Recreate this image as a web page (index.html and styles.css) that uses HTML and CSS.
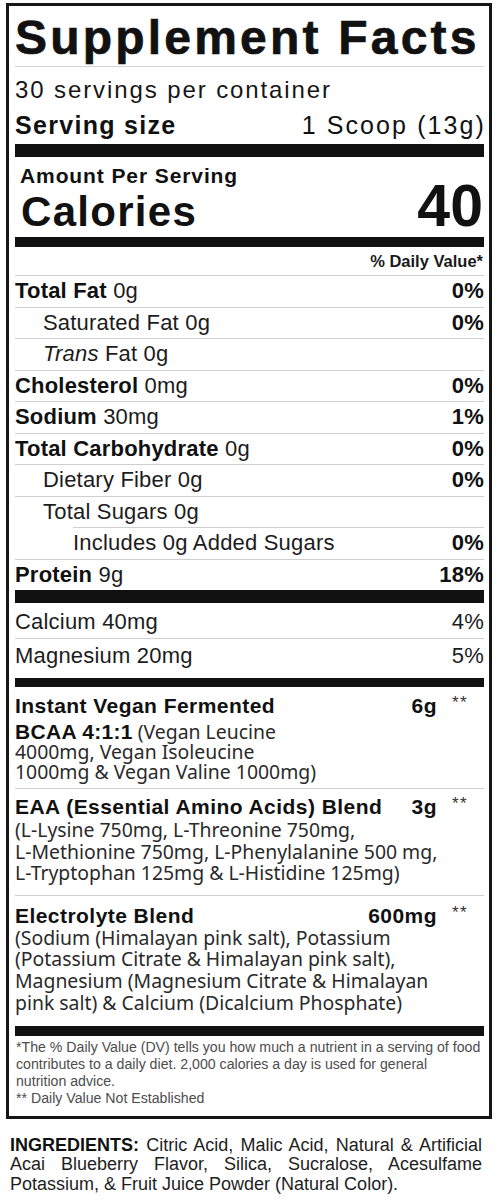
FILE: index.html
```html
<!DOCTYPE html>
<html lang="en">
<head>
<meta charset="utf-8">
<title>Supplement Facts</title>
<link rel="stylesheet" href="styles.css">
</head>
<body>
<div class="label">
  <h1 class="title">Supplement Facts</h1>
  <div class="servings">30 servings per container</div>
  <div class="serving-size"><span class="ss-label">Serving size</span><span class="ss-value">1 Scoop (13g)</span></div>
  <div class="bar bar-13"></div>
  <div class="amount">Amount Per Serving</div>
  <div class="calories"><span class="cal-label">Calories</span><span class="cal-value">40</span></div>
  <div class="bar bar-10"></div>
  <div class="dv-head">% Daily Value*</div>
  <div class="nutrients">
    <div class="row"><span><b>Total Fat</b> 0g</span><b>0%</b></div>
    <div class="row indent1"><span>Saturated Fat 0g</span><b>0%</b></div>
    <div class="row indent1"><span><i>Trans</i> Fat 0g</span></div>
    <div class="row"><span><b>Cholesterol</b> 0mg</span><b>0%</b></div>
    <div class="row"><span><b>Sodium</b> 30mg</span><b>1%</b></div>
    <div class="row"><span><b>Total Carbohydrate</b> 0g</span><b>0%</b></div>
    <div class="row indent1"><span>Dietary Fiber 0g</span><b>0%</b></div>
    <div class="row indent1"><span>Total Sugars 0g</span></div>
    <div class="row indent2"><span>Includes 0g Added Sugars</span><b>0%</b></div>
    <div class="row"><span><b>Protein</b> 9g</span><b>18%</b></div>
  </div>
  <div class="bar bar-13"></div>
  <div class="minerals">
    <div class="mrow mrow-first"><span>Calcium 40mg</span><span>4%</span></div>
    <div class="mrow mrow-last"><span>Magnesium 20mg</span><span>5%</span></div>
  </div>
  <div class="bar bar-9"></div>
  <div class="blend blend-bcaa">
    <div class="blend-head"><span class="b-name">Instant Vegan Fermented</span><span class="b-amt">6g</span><span class="stars">**</span></div>
    <p class="blend-desc"><b class="desc-bold">BCAA 4:1:1</b> (Vegan Leucine<br>4000mg, Vegan Isoleucine<br>1000mg &amp; Vegan Valine 1000mg)</p>
  </div>
  <div class="blend blend-eaa">
    <div class="blend-head"><span class="b-name">EAA (Essential Amino Acids) Blend</span><span class="b-amt">3g</span><span class="stars">**</span></div>
    <p class="blend-desc">(L-Lysine 750mg, L-Threonine 750mg,<br>L-Methionine 750mg, L-Phenylalanine 500 mg,<br>L-Tryptophan 125mg &amp; L-Histidine 125mg)</p>
  </div>
  <div class="blend blend-elec">
    <div class="blend-head"><span class="b-name">Electrolyte Blend</span><span class="b-amt">600mg</span><span class="stars">**</span></div>
    <p class="blend-desc">(Sodium (Himalayan pink salt), Potassium<br>(Potassium Citrate &amp; Himalayan pink salt),<br>Magnesium (Magnesium Citrate &amp; Himalayan<br>pink salt) &amp; Calcium (Dicalcium Phosphate)</p>
  </div>
  <div class="bar bar-10"></div>
  <p class="footnote">*The % Daily Value (DV) tells you how much a nutrient in a serving of food<br>contributes to a daily diet. 2,000 calories a day is used for general<br>nutrition advice.<br>** Daily Value Not Established</p>
</div>
<p class="ingredients"><b>INGREDIENTS:</b> Citric Acid, Malic Acid, Natural &amp; Artificial Acai Blueberry Flavor, Silica, Sucralose, Acesulfame Potassium, &amp; Fruit Juice Powder (Natural Color).</p>
</body>
</html>
```

FILE: styles.css
```css
* {
  box-sizing: border-box;
  margin: 0;
  padding: 0;
}

html, body {
  background: #ffffff;
}

body {
  width: 500px;
  font-family: "Liberation Sans", Arial, Helvetica, sans-serif;
  color: #111111;
}

.label {
  margin: 3px 0 0 6px;
  width: 486px;
  border: 3px solid #161616;
  padding: 0 5px 0 6px;
}

.title {
  font-size: 48px;
  font-weight: 700;
  letter-spacing: 3.2px;
  line-height: 56px;
  padding-top: 4px;
  height: 61px;
  border-bottom: 1px solid #d2d2d2;
  -webkit-text-stroke: 0.7px #111111;
  white-space: nowrap;
}

.servings {
  font-size: 24px;
  letter-spacing: 1.9px;
  line-height: 28px;
  padding-top: 9px;
  color: #161616;
  white-space: nowrap;
}

.serving-size {
  display: flex;
  justify-content: space-between;
  font-size: 25px;
  line-height: 28px;
  padding: 7px 0 5px;
  white-space: nowrap;
}

.ss-label {
  font-weight: 700;
  letter-spacing: 1.3px;
}

.ss-value {
  letter-spacing: 2.1px;
  margin-right: -2px;
}

.bar {
  background: #111111;
}

.bar-13 { height: 13px; }
.bar-10 { height: 10px; }
.bar-9 { height: 9px; }

.amount {
  font-size: 21px;
  font-weight: 700;
  letter-spacing: 0.9px;
  line-height: 22px;
  padding: 8px 0 0 5px;
  white-space: nowrap;
}

.calories {
  display: flex;
  justify-content: space-between;
  align-items: baseline;
  height: 50px;
  padding-left: 6px;
  font-weight: 700;
}

.cal-label {
  font-size: 42px;
  line-height: 50px;
  letter-spacing: 1.3px;
}

.cal-value {
  font-size: 59px;
  line-height: 38px;
  margin-right: 1px;
}

.dv-head {
  text-align: right;
  font-size: 16.5px;
  font-weight: 700;
  line-height: 28px;
  height: 28px;
  padding-right: 1px;
  color: #1a1a1a;
}

.row {
  display: flex;
  justify-content: space-between;
  height: 31.5px;
  line-height: 30.5px;
  border-top: 1px solid #cfcfcf;
  font-size: 22px;
  letter-spacing: 0.2px;
  color: #1c1c1c;
  white-space: nowrap;
}

.row b {
  color: #111111;
}

.indent1 > span:first-child {
  padding-left: 28px;
}

.indent2 {
  margin-left: 58px;
}

.mrow {
  display: flex;
  justify-content: space-between;
  font-size: 22px;
  letter-spacing: 0.2px;
  line-height: 32px;
  color: #1c1c1c;
  white-space: nowrap;
}

.mrow-first {
  padding: 3px 0 0;
  height: 35px;
}

.mrow-last {
  border-top: 1px solid #cfcfcf;
  padding: 1px 0 6px;
  height: 40px;
}

.blend {
  border-bottom: 1px solid #cfcfcf;
}

.blend-elec {
  border-bottom: none;
}

.blend-head {
  display: grid;
  grid-template-columns: 1fr auto 47px;
  align-items: start;
  font-size: 21px;
  font-weight: 700;
  letter-spacing: 0.45px;
  line-height: 24px;
  white-space: nowrap;
}

.stars {
  font-size: 17px;
  font-weight: 400;
  line-height: 18px;
  letter-spacing: 1.5px;
  padding-left: 15px;
  color: #333333;
}

.blend-desc {
  font-family: "Noto Sans", "Open Sans", sans-serif;
  font-size: 19.4px;
  color: #2a2a2a;
  white-space: nowrap;
}

.desc-bold {
  font-family: "Liberation Sans", Arial, sans-serif;
  font-size: 21px;
  font-weight: 700;
  letter-spacing: 0.3px;
  color: #111111;
}

.blend-bcaa {
  padding: 7px 0 6px;
}

.blend-bcaa .blend-desc {
  margin-top: 4px;
  line-height: 20px;
}

.blend-eaa {
  padding: 6px 0 11px;
}

.blend-eaa .blend-desc {
  line-height: 21.6px;
}

.blend-elec {
  padding: 8px 0 12.6px;
}

.blend-elec .blend-head {
  line-height: 23px;
}

.blend-elec .blend-desc {
  line-height: 21.6px;
}

.footnote {
  font-size: 14.15px;
  line-height: 17px;
  padding: 3px 0 9px 1px;
  color: #4d4d4d;
  white-space: nowrap;
}

.ingredients {
  margin: 17px 18px 0 10px;
  font-size: 18px;
  line-height: 19.5px;
  text-align: justify;
  color: #1e1e1e;
}

.ingredients b {
  color: #111111;
}
```
